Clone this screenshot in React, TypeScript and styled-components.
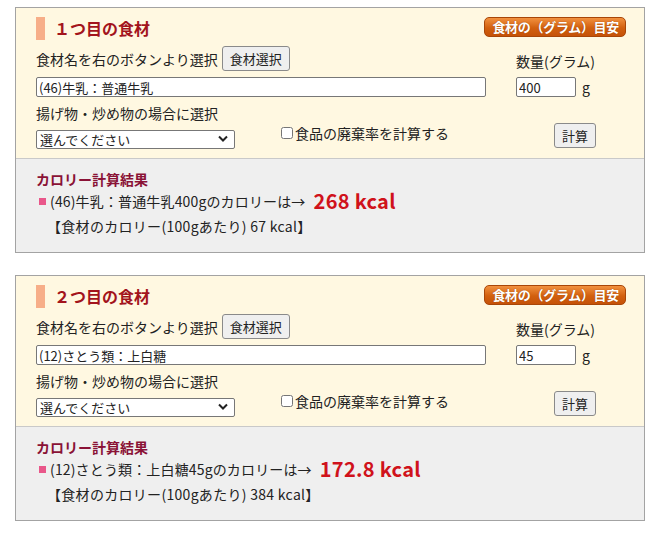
import React from "react";
import styled, { createGlobalStyle } from "styled-components";

const GlobalStyle = createGlobalStyle`
  body {
    margin: 0;
    background: #ffffff;
    font-family: "Noto Sans CJK JP", "Noto Sans", sans-serif;
    font-size: 14px;
    color: #222;
  }
`;

interface Ingredient {
  no: string;
  name: string;
  grams: string;
  kcal: string;
  per100: string;
}

const items: Ingredient[] = [
  { no: "１", name: "(46)牛乳：普通牛乳", grams: "400", kcal: "268 kcal", per100: "67 kcal" },
  { no: "２", name: "(12)さとう類：上白糖", grams: "45", kcal: "172.8 kcal", per100: "384 kcal" },
];

const Page = styled.div`
  display: flex;
  flex-direction: column;
  gap: 22px;
  padding: 7px 0 0 15px;
`;

const Card = styled.section`
  width: 630px;
  box-sizing: border-box;
  border: 1px solid #a3a3a3;
`;

const Upper = styled.div`
  background: #fff8e1;
  padding: 9px 18px 10px 20px;
`;

const Header = styled.div`
  display: flex;
  justify-content: space-between;
  align-items: center;
  height: 23px;
`;

const Title = styled.h2`
  display: flex;
  align-items: center;
  gap: 9px;
  margin: 0;
  font-size: 16px;
  font-weight: bold;
  color: #a3141c;
  line-height: 23px;
  &::before {
    content: "";
    display: block;
    width: 9px;
    height: 23px;
    background: #f7ae88;
  }
`;

const Badge = styled.span`
  display: inline-block;
  margin-top: -4px;
  padding: 0 6px 0 7px;
  height: 18px;
  line-height: 18px;
  border: 1px solid #a84608;
  border-radius: 5px;
  background: linear-gradient(#f2913f, #d2600f 55%, #c55208);
  color: #fff;
  font-size: 13px;
  font-weight: bold;
  letter-spacing: -0.3px;
  text-shadow: 0 0 1px #8a3a00;
`;

const FormGrid = styled.div`
  display: grid;
  grid-template-columns: 450px 81px;
  column-gap: 30px;
  margin-top: 6px;
`;

const Column = styled.div`
  display: flex;
  flex-direction: column;
`;

const Row = styled.div<{ top?: number }>`
  display: flex;
  align-items: ${(p) => (p.top !== undefined ? "flex-start" : "center")};
  margin-top: ${(p) => (p.top ? p.top : 0)}px;
`;

const Label = styled.span<{ top?: number }>`
  line-height: 20px;
  margin-top: ${(p) => (p.top ? p.top : 0)}px;
  white-space: nowrap;
`;

const Button = styled.button<{ w: number }>`
  width: ${(p) => p.w}px;
  height: 25px;
  padding: 0;
  border: 1px solid #8a8a8a;
  border-radius: 3px;
  background: #efefef;
  font-family: inherit;
  font-size: 13px;
  color: #222;
`;

const TextInput = styled.input<{ w: number }>`
  box-sizing: border-box;
  width: ${(p) => p.w}px;
  height: 20px;
  padding: 0 2px;
  border: 1px solid #777;
  border-radius: 2px;
  background: #fff;
  font-family: inherit;
  font-size: 13px;
  color: #222;
  outline: none;
`;

const SelectBox = styled.div`
  position: relative;
  width: 199px;
  height: 19px;
  margin-top: 6px;
  svg {
    position: absolute;
    right: 7px;
    top: 6px;
    pointer-events: none;
  }
`;

const Select = styled.select`
  appearance: none;
  box-sizing: border-box;
  width: 100%;
  height: 100%;
  margin: 0;
  padding: 0 0 0 3px;
  border: 1px solid #777;
  border-radius: 2px;
  background: #fff;
  font-family: inherit;
  font-size: 13px;
  line-height: 17px;
  color: #222;
`;

const CheckLabel = styled.label`
  display: flex;
  align-items: center;
  margin-left: 46px;
  line-height: 20px;
  input {
    width: 12px;
    height: 12px;
    margin: 0 2px 0 0;
  }
`;

const Unit = styled.span`
  margin-left: 6px;
  line-height: 20px;
`;

const CalcButton = styled(Button)`
  align-self: flex-end;
  margin-top: 26px;
  margin-right: 1px;
`;

const Result = styled.div`
  background: #efefef;
  border-top: 1px solid #c9c9c9;
  padding: 10px 20px 16px 20px;
`;

const ResultTitle = styled.div`
  line-height: 20px;
  font-weight: bold;
  color: #8a1236;
`;

const ResultLine = styled.div`
  display: flex;
  align-items: center;
  line-height: 24px;
  letter-spacing: 0.15px;
`;

const Mark = styled.span`
  display: inline-block;
  width: 7px;
  height: 7px;
  margin: 0 4px 0 3px;
  background: #e9578a;
`;

const Kcal = styled.span`
  margin-left: 8px;
  font-size: 20px;
  font-weight: bold;
  color: #d0121b;
  letter-spacing: 0.3px;
`;

const Per100 = styled.div`
  margin-top: 3px;
  padding-left: 11px;
  line-height: 20px;
  letter-spacing: 0.3px;
`;

function Chevron() {
  return (
    <svg width="10" height="7" viewBox="0 0 10 7">
      <path d="M1 1.5 L5 5.5 L9 1.5" fill="none" stroke="#222" strokeWidth="2" />
    </svg>
  );
}

function IngredientCard({ item }: { item: Ingredient }) {
  return (
    <Card>
      <Upper>
        <Header>
          <Title>{item.no}つ目の食材</Title>
          <Badge>食材の（グラム）目安</Badge>
        </Header>
        <FormGrid>
          <Column>
            <Row>
              <Label>食材名を右のボタンより選択</Label>
              <Button w={68} style={{ marginLeft: 4 }}>食材選択</Button>
            </Row>
            <TextInput w={450} defaultValue={item.name} style={{ marginTop: 6 }} />
            <Label top={6}>揚げ物・炒め物の場合に選択</Label>
            <Row top={0}>
              <SelectBox>
                <Select defaultValue="">
                  <option value="">選んでください</option>
                </Select>
                <Chevron />
              </SelectBox>
              <CheckLabel>
                <input type="checkbox" />
                食品の廃棄率を計算する
              </CheckLabel>
            </Row>
          </Column>
          <Column>
            <Label top={5}>数量(グラム)</Label>
            <Row style={{ marginTop: 6 }}>
              <TextInput w={60} defaultValue={item.grams} />
              <Unit>g</Unit>
            </Row>
            <CalcButton w={42}>計算</CalcButton>
          </Column>
        </FormGrid>
      </Upper>
      <Result>
        <ResultTitle>カロリー計算結果</ResultTitle>
        <ResultLine>
          <Mark />
          {item.name}
          {item.grams}gのカロリーは→
          <Kcal>{item.kcal}</Kcal>
        </ResultLine>
        <Per100>【食材のカロリー(100gあたり) {item.per100}】</Per100>
      </Result>
    </Card>
  );
}

export default function App() {
  return (
    <>
      <GlobalStyle />
      <Page>
        {items.map((item) => (
          <IngredientCard key={item.no} item={item} />
        ))}
      </Page>
    </>
  );
}
